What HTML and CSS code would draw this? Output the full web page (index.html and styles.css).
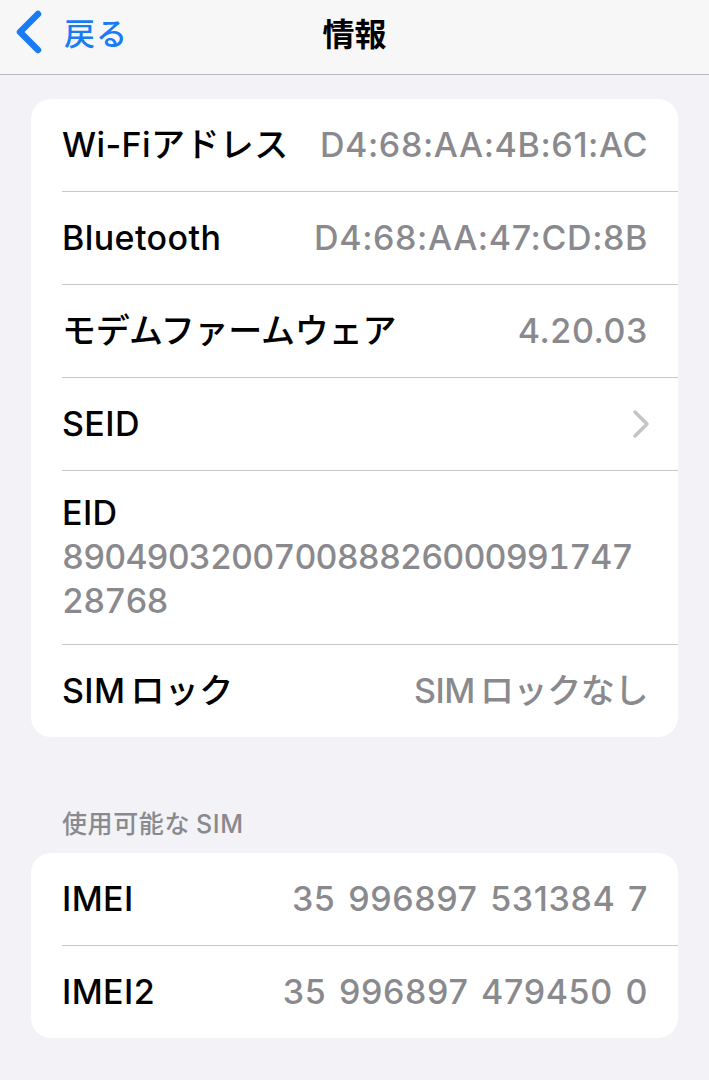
FILE: index.html
```html
<!DOCTYPE html>
<html lang="ja">
<head>
<meta charset="utf-8">
<title>情報</title>
<link rel="stylesheet" href="styles.css">
</head>
<body>
<header class="nav">
  <a class="back" href="#">
    <svg class="back-icon" width="30" height="44" viewBox="0 0 30 44" aria-hidden="true">
      <polyline points="24,4 6,22 24,40" fill="none" stroke="#1a7cf4" stroke-width="6.5" stroke-linecap="round" stroke-linejoin="round"/>
    </svg>
    <span class="back-text">戻る</span>
  </a>
  <h1 class="title">情報</h1>
  <span class="nav-spacer"></span>
</header>
<main class="content">
  <section class="group">
    <div class="row"><span class="label">Wi-Fiアドレス</span><span class="value">D4:68:AA:4B:61:AC</span></div>
    <div class="row"><span class="label">Bluetooth</span><span class="value">D4:68:AA:47:CD:8B</span></div>
    <div class="row"><span class="label label-kana">モデムファームウェア</span><span class="value">4.20.03</span></div>
    <div class="row"><span class="label">SEID</span>
      <svg class="chevron" width="20" height="30" viewBox="0 0 20 30" aria-hidden="true">
        <polyline points="4,3 16,15 4,27" fill="none" stroke="#c4c4c7" stroke-width="3.5" stroke-linecap="round" stroke-linejoin="round"/>
      </svg>
    </div>
    <div class="row row-stack"><span class="label">EID</span><span class="value value-block">890490320070088826000991747<br>28768</span></div>
    <div class="row"><span class="label"><span class="latin">SIM</span>ロック</span><span class="value value-kana"><span class="latin">SIM</span>ロックなし</span></div>
  </section>
  <h2 class="group-header">使用可能な<span class="latin-after">SIM</span></h2>
  <section class="group">
    <div class="row"><span class="label">IMEI</span><span class="value value-spaced">35 996897 531384 7</span></div>
    <div class="row"><span class="label">IMEI2</span><span class="value value-spaced">35 996897 479450 0</span></div>
  </section>
</main>
</body>
</html>
```
FILE: styles.css
```css
* { box-sizing: border-box; }

html, body {
  margin: 0;
  padding: 0;
}

body {
  background: #f2f2f7;
  font-family: "Inter", "Noto Sans CJK JP", sans-serif;
  color: #000;
  width: 709px;
  min-height: 1080px;
}

.nav {
  height: 75px;
  background: #f7f7f8;
  border-bottom: 1px solid #b9b9bd;
  display: grid;
  grid-template-columns: 1fr auto 1fr;
  align-items: center;
  padding-bottom: 10px;
}

.back {
  display: flex;
  align-items: center;
  text-decoration: none;
  color: #1a7cf4;
  padding-left: 14px;
  gap: 20px;
}

.back-icon { display: block; }

.back-text {
  font-family: "Noto Sans CJK JP", sans-serif;
  font-size: 31px;
  font-weight: 500;
  line-height: 44px;
  letter-spacing: 1px;
}

.title {
  margin: 0;
  font-family: "Noto Sans CJK JP", sans-serif;
  font-size: 32px;
  font-weight: 700;
  line-height: 44px;
}

.content {
  padding: 24px 31px 40px;
}

.group {
  background: #fff;
  border-radius: 20px;
  overflow: hidden;
}

.row {
  margin-left: 31px;
  padding-right: 30px;
  height: 93px;
  border-bottom: 1px solid #c8c8cb;
  display: flex;
  align-items: center;
  justify-content: space-between;
  font-size: 34px;
  line-height: 44px;
}

.row:last-child { border-bottom: none; height: 92px; }

.row-stack {
  height: auto;
  flex-direction: column;
  align-items: flex-start;
  padding-top: 20px;
  padding-bottom: 21px;
}

.label {
  font-weight: 500;
  letter-spacing: 0.4px;
  white-space: nowrap;
}

.label-kana { letter-spacing: -0.2px; }

.value {
  color: #8a8a8e;
  font-weight: 500;
  letter-spacing: 0.6px;
  white-space: nowrap;
}

.value-kana { letter-spacing: -0.4px; }

.value-spaced { word-spacing: 3px; }

.value-block {
  font-variant-numeric: tabular-nums;
  letter-spacing: -0.9px;
}

.latin { margin-right: 5px; }
.latin-after { margin-left: 6px; }

.chevron { display: block; margin-right: -3px; }

.group-header {
  margin: 72px 0 14px 31px;
  font-size: 25px;
  line-height: 30px;
  font-weight: 500;
  letter-spacing: 0.6px;
  color: #8a8a8e;
}
```
